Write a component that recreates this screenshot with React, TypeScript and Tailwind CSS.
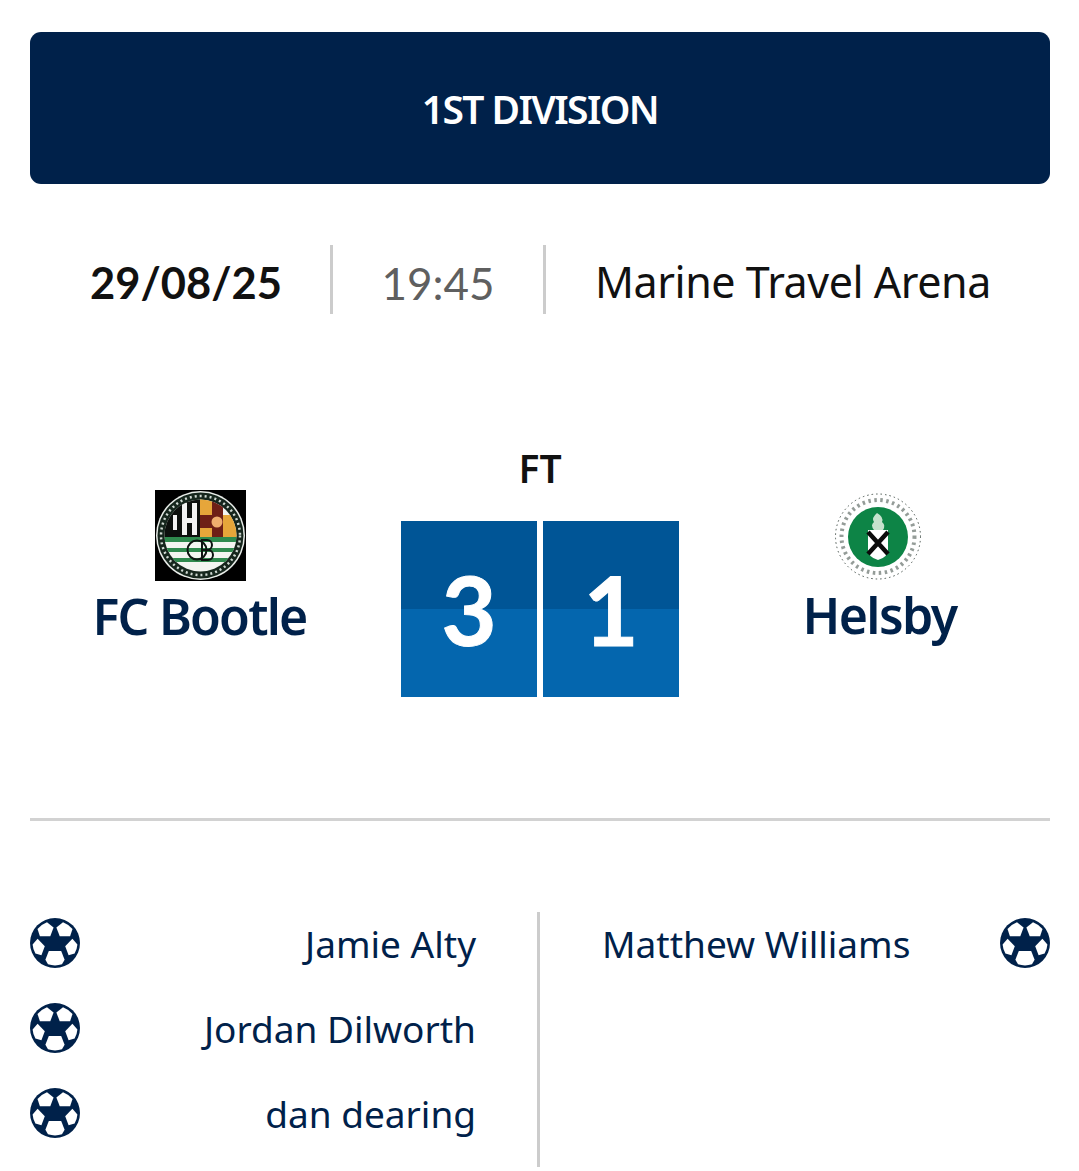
const navy = "text-[#00214a]";
const lato = "font-['Lato',sans-serif]";

function Ball() {
  return (
    <svg className="w-[50px] h-[50px] shrink-0" viewBox="0 0 50 50">
      <circle cx="25" cy="25" r="25" fill="#00214a" />
      <g fill="#ffffff">
        <path d="M17 4.2 L23.6 9.4 L20.3 18.3 L9.9 18.3 L7.5 11 A22.5 22.5 0 0 1 17 4.2 Z" />
        <path d="M33 4.2 L26.4 9.4 L29.7 18.3 L40.1 18.3 L42.5 11 A22.5 22.5 0 0 0 33 4.2 Z" />
        <path d="M7.6 20.8 L14.8 28.3 L11.4 37.2 L5.4 35.6 A22.5 22.5 0 0 1 2.6 26.4 Z" />
        <path d="M42.4 20.8 L35.2 28.3 L38.6 37.2 L44.6 35.6 A22.5 22.5 0 0 0 47.4 26.4 Z" />
        <path d="M18.8 33 L31.2 33 L34.6 41.7 L32 46.3 A22.5 22.5 0 0 1 18 46.3 L15.4 41.7 Z" />
      </g>
    </svg>
  );
}

function BootleCrest() {
  return (
    <svg className="w-[91px] h-[91px]" viewBox="0 0 91 91">
      <defs>
        <clipPath id="bootle-inner">
          <circle cx="45.5" cy="45.5" r="36" />
        </clipPath>
      </defs>
      <rect width="91" height="91" fill="#000000" />
      <circle cx="45.5" cy="45.5" r="44.5" fill="#e8ece8" />
      <circle cx="45.5" cy="45.5" r="43" fill="#16261d" />
      <circle cx="45.5" cy="45.5" r="39.5" fill="none" stroke="#cfd8d2" strokeWidth="2.5" strokeDasharray="2 3" />
      <g clipPath="url(#bootle-inner)">
        <rect width="91" height="91" fill="#f3f5f1" />
        <rect x="0" y="0" width="45" height="47" fill="#0c0f0d" />
        <path d="M18 25 h4 v15 h-4 Z M27 13 h5 v32 h-5 Z M37 13 h5 v32 h-5 Z M30 28 h9 v5 h-9 Z" fill="#f2f2f2" />
        <path d="M45 5 h12 v20 h-12 Z M68 25 h14 v13 h-14 Z M45 38 h12 v9 h-12 Z M68 38 h14 v9 h-14 Z" fill="#e6a63a" />
        <path d="M57 5 h11 v20 h-11 Z M45 25 h23 v13 h-23 Z M57 38 h11 v9 h-11 Z" fill="#6e1f16" />
        <circle cx="62" cy="32" r="5.5" fill="#efae6e" />
        <path d="M0 47 H91 V52 H0 Z M0 58 H91 V62 H0 Z M0 68 H91 V72 H0 Z" fill="#2f8a4e" />
      </g>
      <circle cx="42" cy="60" r="9.5" fill="none" stroke="#0c1410" strokeWidth="2" />
      <path d="M47 50 h5 a4.5 4.5 0 0 1 0 10 h-5 Z M47 60 h6 a5 5 0 0 1 0 10 h-6 Z" fill="none" stroke="#0c1410" strokeWidth="2" />
    </svg>
  );
}

function HelsbyCrest() {
  return (
    <svg className="w-[90px] h-[90px] mr-[4px]" viewBox="0 0 90 90">
      <rect width="90" height="90" fill="#ffffff" />
      <circle cx="45" cy="46.5" r="42.5" fill="none" stroke="#4a5650" strokeWidth="1" strokeDasharray="1.5 3" />
      <circle cx="45" cy="46.5" r="36.5" fill="none" stroke="#3c4a43" strokeWidth="4" strokeDasharray="2.5 3.5" opacity="0.55" />
      <circle cx="45" cy="47" r="30" fill="#0d8446" />
      <path d="M44 23 q-6 5 -3 9 q-4 3 0 8 h9 q3 -5 -1 -8 q2 -5 -5 -9 Z" fill="#c5e2cd" />
      <path d="M35 40 H55 V60 Q55 67 45 70 Q35 67 35 60 Z" fill="#ffffff" />
      <path d="M35 42 L55 64 M55 42 L35 64" stroke="#0b0b0b" strokeWidth="4.5" />
    </svg>
  );
}

function Scorer({ name }: { name: string }) {
  return (
    <div className="h-[85px] flex items-start justify-between">
      <div className="pt-[6px]"><Ball /></div>
      <span className={`text-[37px] leading-[64px] pr-[61px] ${navy}`}>{name}</span>
    </div>
  );
}

export default function App() {
  return (
    <div
      className="w-[1079px] h-[1171px] overflow-hidden bg-white pt-[32px] pl-[30px]"
      style={{ fontFamily: '"Noto Sans", "Open Sans", sans-serif' }}
    >
      <div className="w-[1020px]">
        {/* Competition banner */}
        <div className="h-[152px] rounded-[11px] bg-[#00214a] flex items-center justify-center">
          <span className="pt-[2px] text-white text-[39px] font-semibold tracking-[-1.6px]">1ST DIVISION</span>
        </div>

        {/* Date, time, venue */}
        <div className="mt-[61px] h-[69px] flex items-center">
          <span className={`w-[300px] pt-[6px] pl-[60px] text-[43.5px] font-bold text-[#111111] ${lato}`}>29/08/25</span>
          <div className="w-[3px] h-[69px] bg-[#cccccc]" />
          <span className={`w-[210px] pt-[6px] text-center text-[44px] text-[#5f5f5f] ${lato}`}>19:45</span>
          <div className="w-[3px] h-[69px] bg-[#cccccc]" />
          <span className="pl-[49px] pt-[6px] text-[43px] text-[#111111] tracking-[-0.45px]">Marine Travel Arena</span>
        </div>

        {/* Score */}
        <div className="mt-[129px] h-[258px] flex justify-between">
          <div className="w-[341px] flex flex-col items-center pt-[47px]">
            <BootleCrest />
            <span className={`pr-[2px] text-[50px] leading-[70px] font-semibold tracking-[-1.8px] ${navy}`}>FC Bootle</span>
          </div>
          <div className="w-[278px] flex flex-col items-center">
            <span className="text-[39px] leading-[50px] font-semibold text-[#111111]">FT</span>
            <div className="mt-[28px] flex gap-[6px]">
              {["3", "1"].map((score) => (
                <div key={score} className="relative w-[136px] h-[176px] flex flex-col">
                  <div className="h-[88px] bg-[#005596]" />
                  <div className="h-[88px] bg-[#0466ae]" />
                  <span className={`absolute inset-0 flex items-center justify-center text-white text-[95px] font-bold [-webkit-text-stroke:1px_#ffffff] ${lato}`}>
                    {score}
                  </span>
                </div>
              ))}
            </div>
          </div>
          <div className="w-[341px] flex flex-col items-center pt-[47px]">
            <HelsbyCrest />
            <span className={`text-[50px] leading-[70px] font-semibold tracking-[-1.6px] ${navy}`}>Helsby</span>
          </div>
        </div>

        <div className="mt-[117px] h-[3px] bg-[#d2d2d2]" />

        {/* Goal scorers */}
        <div className="mt-[91px] flex h-[255px]">
          <div className="w-[507px] shrink-0">
            <Scorer name="Jamie Alty" />
            <Scorer name="Jordan Dilworth" />
            <Scorer name="dan dearing" />
          </div>
          <div className="w-[3px] h-[255px] bg-[#cccccc]" />
          <div className="flex-1 pl-[62px]">
            <div className="h-[85px] flex items-start justify-between">
              <span className={`text-[37px] leading-[64px] ${navy}`}>Matthew Williams</span>
              <div className="pt-[6px]"><Ball /></div>
            </div>
          </div>
        </div>
      </div>
    </div>
  );
}
